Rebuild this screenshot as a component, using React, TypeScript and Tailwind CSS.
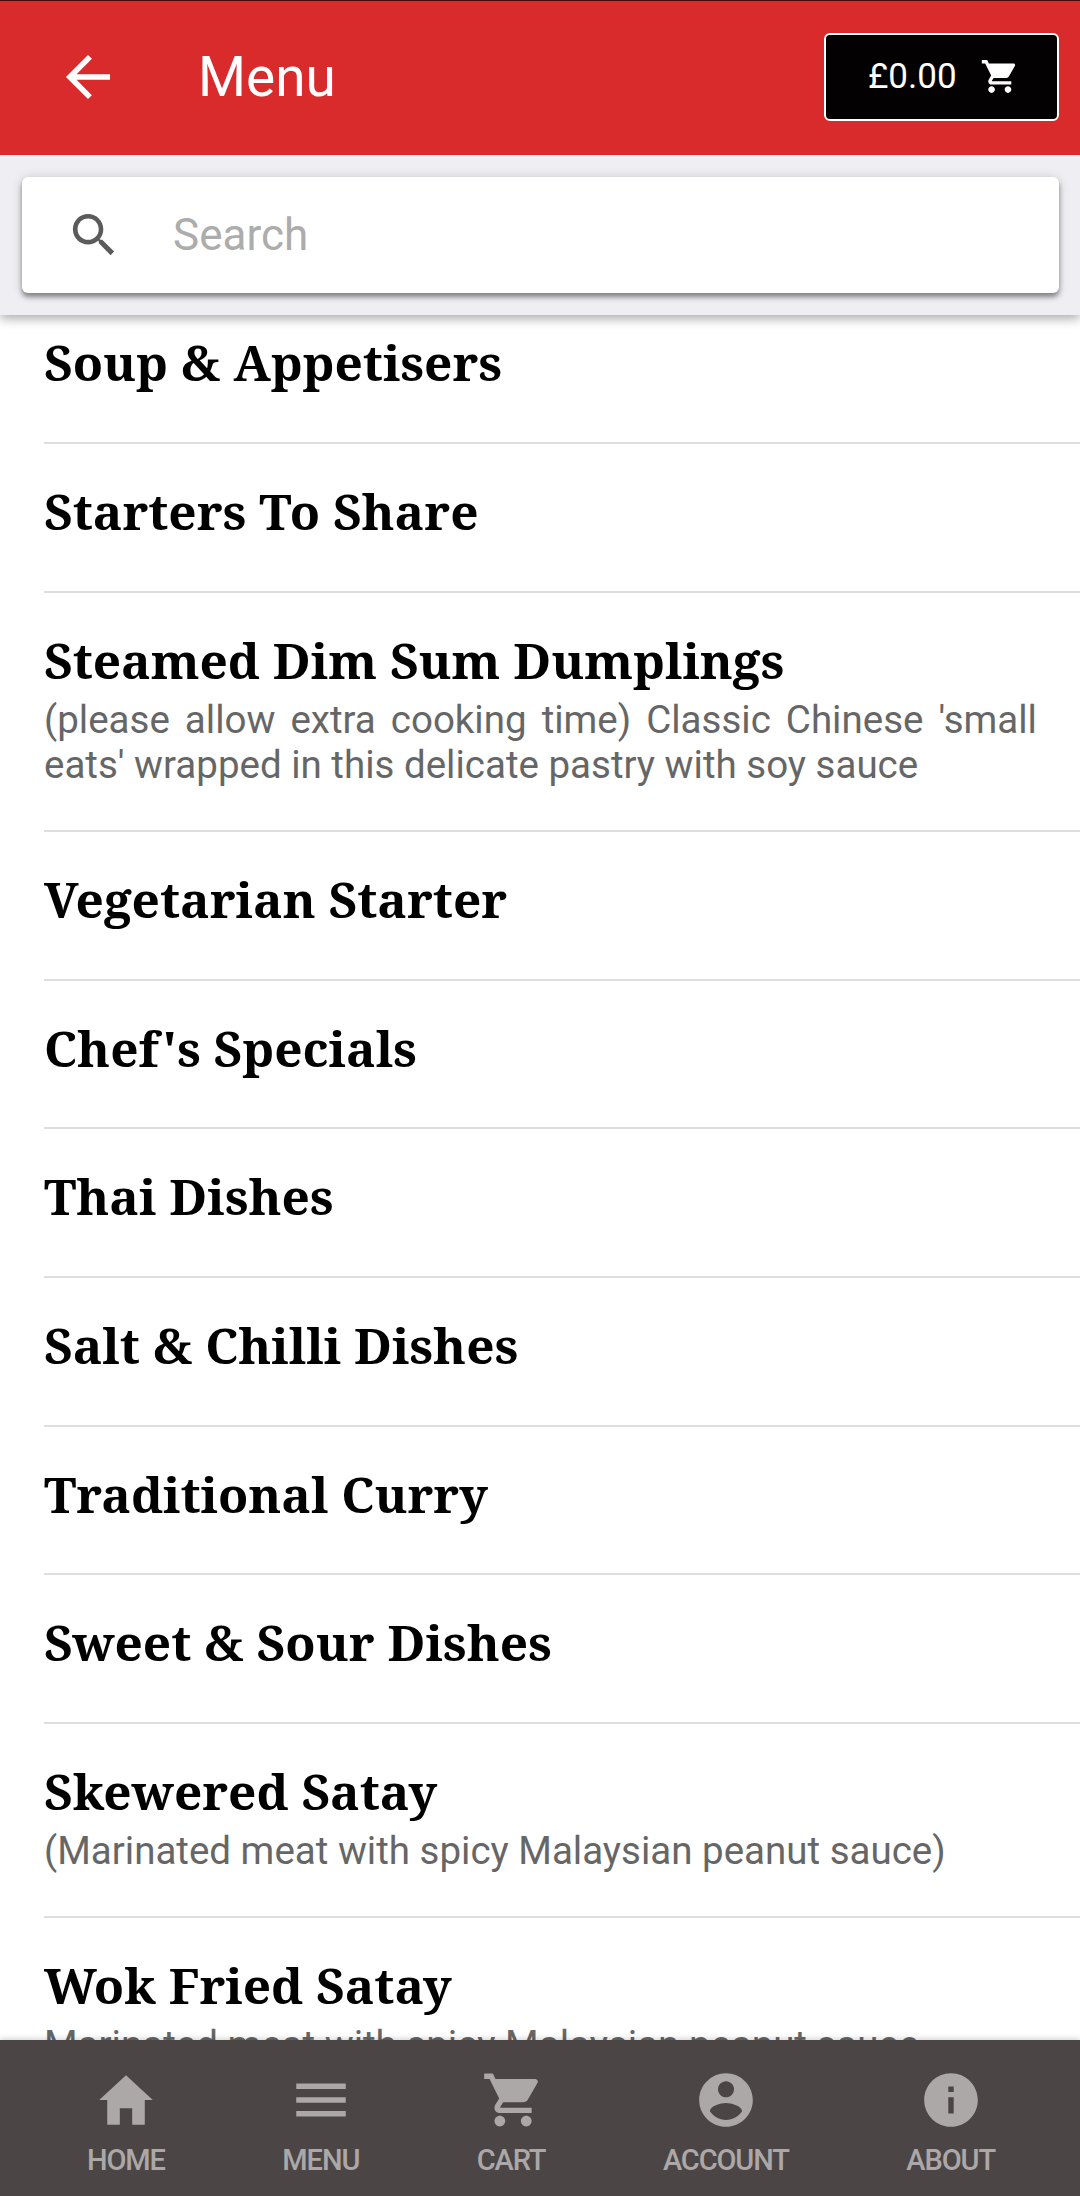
import {
  IoMdArrowBack,
  IoMdCart,
  IoMdContact,
  IoMdHome,
  IoMdInformationCircle,
  IoMdMenu,
  IoMdSearch,
} from 'react-icons/io';

const categories = [
  { name: 'Soup & Appetisers' },
  { name: 'Starters To Share' },
  {
    name: 'Steamed Dim Sum Dumplings',
    description: "(please allow extra cooking time) Classic Chinese 'small eats' wrapped in this delicate pastry with soy sauce",
  },
  { name: 'Vegetarian Starter' },
  { name: "Chef's Specials" },
  { name: 'Thai Dishes' },
  { name: 'Salt & Chilli Dishes' },
  { name: 'Traditional Curry' },
  { name: 'Sweet & Sour Dishes' },
  { name: 'Skewered Satay', description: '(Marinated meat with spicy Malaysian peanut sauce)' },
  { name: 'Wok Fried Satay', description: 'Marinated meat with spicy Malaysian peanut sauce' },
];

const tabs = [
  { label: 'HOME', icon: IoMdHome },
  { label: 'MENU', icon: IoMdMenu },
  { label: 'CART', icon: IoMdCart },
  { label: 'ACCOUNT', icon: IoMdContact },
  { label: 'ABOUT', icon: IoMdInformationCircle },
];

export default function App() {
  return (
    <div className="flex h-[2196px] w-[1080px] flex-col overflow-hidden bg-white font-['Roboto',sans-serif]">
      {/* Header */}
      <header className="z-20 flex h-[155px] shrink-0 items-center border-t border-[#4a0808] bg-[#d92b2b] pr-[21px] pb-[2px] pl-[55px] text-white">
        <IoMdArrowBack className="size-[66px]" />
        <h1 className="ml-[77px] text-[55px]">Menu</h1>
        <button className="ml-auto flex h-[88px] w-[235px] items-center rounded-md border-2 border-white bg-[#030102] pl-[42px] text-[35px]">
          £0.00
          <IoMdCart className="mb-[2px] ml-[21px] size-[41px]" />
        </button>
      </header>

      {/* Search */}
      <div className="z-10 h-[160px] shrink-0 bg-[#efeef3] pt-[22px] pr-[21px] pl-[22px] shadow-[0_4px_10px_rgba(0,0,0,0.32)]">
        <div className="flex h-[116px] items-center rounded-md bg-white pl-[44px] shadow-[0_4px_5px_rgba(0,0,0,0.4),0_1px_12px_rgba(0,0,0,0.15)]">
          <IoMdSearch className="mb-[2px] size-[55px] text-[#5b5b5b]" />
          <span className="ml-[52px] text-[44px] text-[#acacac]">Search</span>
        </div>
      </div>

      {/* Category list, scrolled slightly under the search bar */}
      <main className="min-h-0 flex-1 overflow-hidden pl-[44px]">
        <div className="-mt-[19.67px]">
          {categories.map((category) => (
            <section key={category.name} className="border-b-2 border-[#dedede] pt-[30px] pb-[42.67px]">
              <h2 className="font-['Noto_Serif',serif] text-[49.5px] leading-[74px] font-bold text-black">
                {category.name}
              </h2>
              {category.description && (
                <p className="pr-[43px] text-justify text-[38.5px] leading-[45.33px] text-[#666666]">
                  {category.description}
                </p>
              )}
            </section>
          ))}
        </div>
      </main>

      {/* Bottom tabs */}
      <nav className="z-10 flex h-[156px] shrink-0 justify-between bg-[#4b4645] pt-[27px] pr-[85px] pl-[87px] text-[#aca8a7] shadow-[0_-1px_6px_rgba(0,0,0,0.2)]">
        {tabs.map((tab) => (
          <div key={tab.label} className="flex flex-col items-center">
            <tab.icon className="size-[66px]" />
            <span className="mt-[10px] text-[29px] leading-[34px] font-medium tracking-[-1.1px]">{tab.label}</span>
          </div>
        ))}
      </nav>
    </div>
  );
}
